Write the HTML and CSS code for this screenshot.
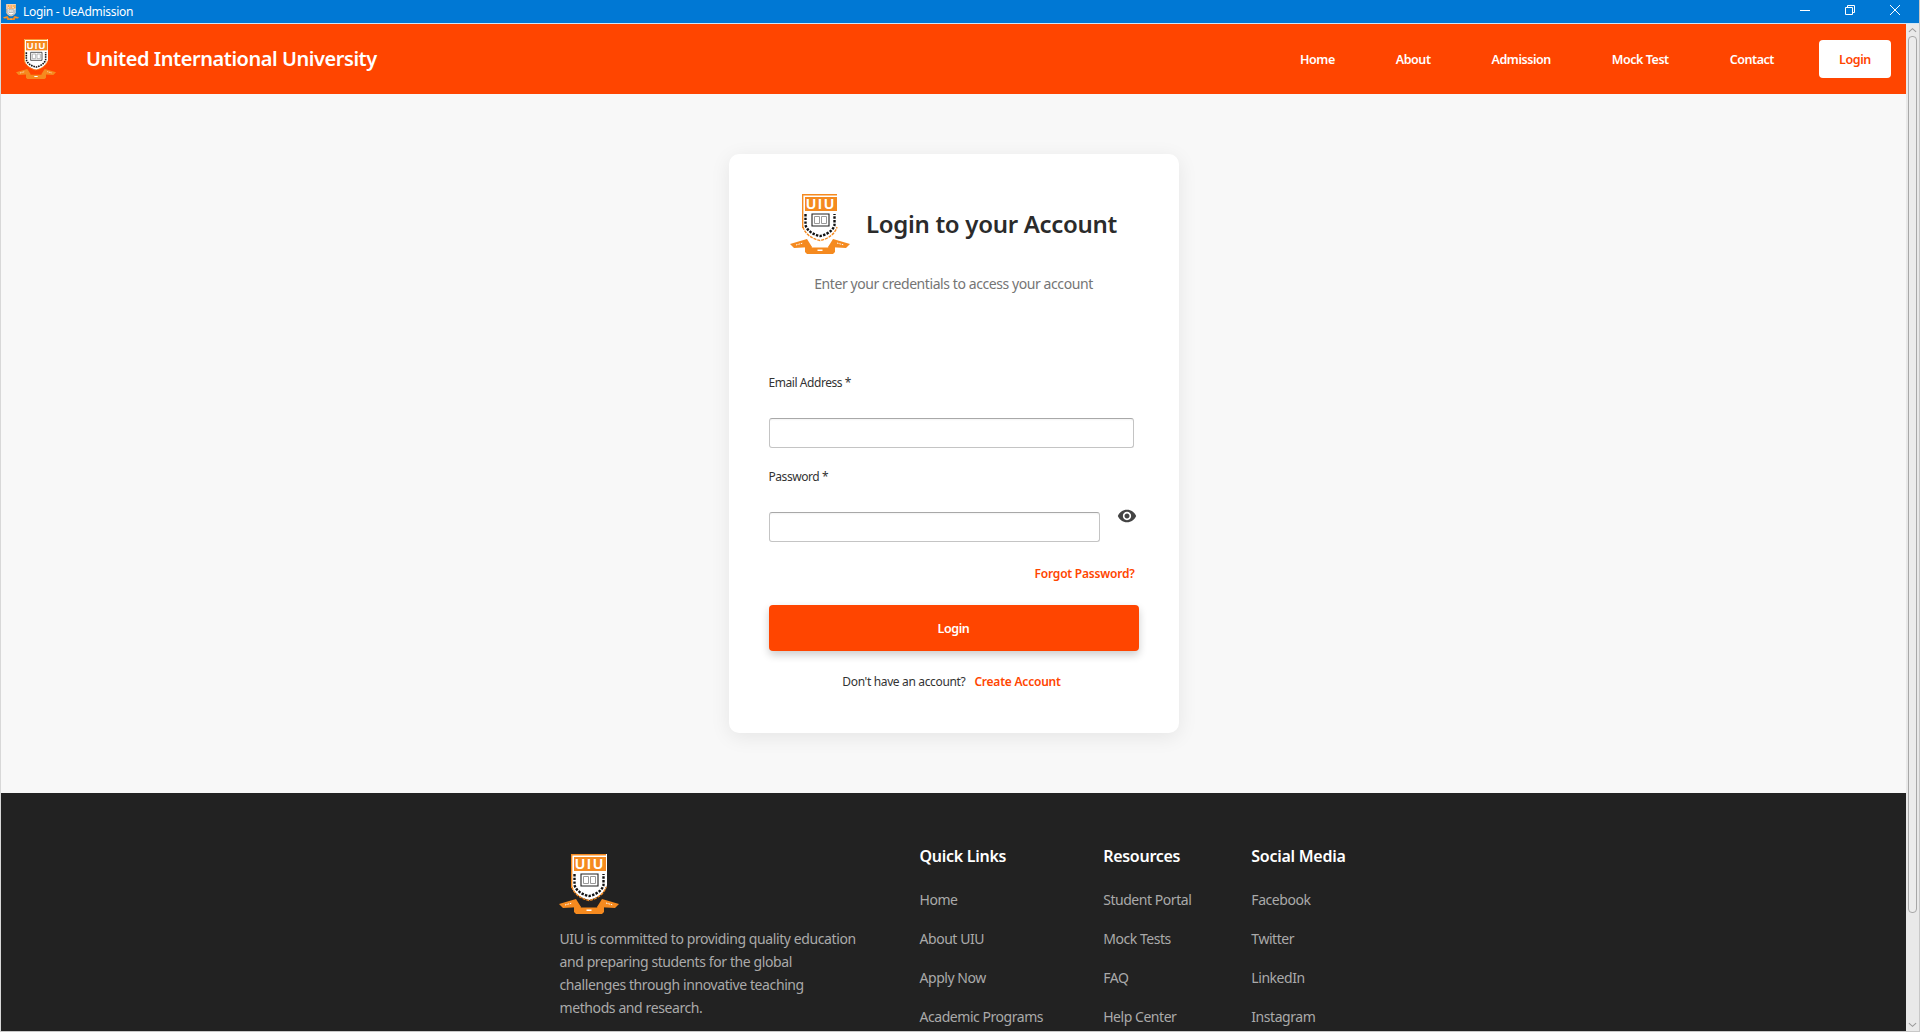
FILE: index.html
```html
<!DOCTYPE html>
<html lang="en">
<head>
<meta charset="utf-8">
<title>Login - UeAdmission</title>
<link rel="stylesheet" href="styles.css">
</head>
<body>
<svg class="defs" width="0" height="0" aria-hidden="true">
  <defs>
    <symbol id="crest" viewBox="0 0 60 60">
      <path d="M12 0H48V31C47 38 39 44 30 46C21 44 13 38 12 31Z" fill="#fff"/>
      <path d="M12.7 34V.7H47" fill="none" stroke="#f58a1f" stroke-width="1.4"/>
      <path d="M15 3H47V17H15Z" fill="#f58a1f"/>
      <text x="31" y="15" class="crest-text">UIU</text>
      <path d="M15.5 20V31C17 37 24 41 30 42C36 41 43 37 44.5 31V20" fill="none" stroke="#111" stroke-width="2.4" stroke-dasharray="2.4 1.3"/>
      <path d="M13 33C15 40 22 45 30 46.5C38 45 45 40 47 33" fill="none" stroke="#f58a1f" stroke-width="1.4" stroke-dasharray="3 1"/>
      <path d="M22 20H39V32H22Z" fill="#fff" stroke="#222" stroke-width="1.1"/>
      <path d="M24.5 22.5H29.5V29.5H24.5ZM31.5 22.5H36.5V29.5H31.5Z" fill="none" stroke="#999" stroke-width="1"/>
      <path d="M0 50L17 45L22 53L4 54Z" fill="#f58a1f"/>
      <path d="M60 50L43 45L38 53L56 54Z" fill="#f58a1f"/>
      <path d="M15 51H20L22 53.5H38L40 51H45V58L43 60H17L15 58Z" fill="#f58a1f"/>
      <path d="M27.5 55.5H32.5V57H27.5Z" fill="#fff"/>
      <path d="M6 51L13 49M47 49L54 51" stroke="#fff" stroke-width="1" stroke-dasharray="1.5 1"/>
    </symbol>
  </defs>
</svg>
<div class="window">
  <div class="titlebar">
    <div class="titlebar-left">
      <svg class="title-icon"><use href="#crest"/></svg>
      <span class="title-text">Login - UeAdmission</span>
    </div>
    <div class="window-controls">
      <svg class="win-btn" viewBox="0 0 10 10"><path d="M0 5.5H10" stroke="#fff" fill="none"/></svg>
      <svg class="win-btn" viewBox="0 0 10 10"><path d="M.5 2.5H7.5V9.5H.5ZM2.5 2.5V.5H9.5V7.5H7.5" stroke="#fff" fill="none"/></svg>
      <svg class="win-btn" viewBox="0 0 10 10"><path d="M0 0L10 10M10 0L0 10" stroke="#fff" fill="none"/></svg>
    </div>
  </div>
  <div class="viewport">
    <div class="page">
      <header class="app-header">
        <div class="brand">
          <svg class="brand-logo"><use href="#crest"/></svg>
          <span class="brand-name">United International University</span>
        </div>
        <nav class="nav">
          <a class="nav-link">Home</a>
          <a class="nav-link">About</a>
          <a class="nav-link">Admission</a>
          <a class="nav-link">Mock Test</a>
          <a class="nav-link">Contact</a>
          <a class="nav-login">Login</a>
        </nav>
      </header>
      <main class="main">
        <section class="card">
          <div class="card-head">
            <svg class="card-logo"><use href="#crest"/></svg>
            <h1 class="card-title">Login to your Account</h1>
          </div>
          <p class="card-sub">Enter your credentials to access your account</p>
          <form class="form">
            <label class="field-label">Email Address *</label>
            <div class="input input-email"></div>
            <label class="field-label">Password *</label>
            <div class="password-row">
              <div class="input input-password"></div>
              <svg class="eye" viewBox="0 0 24 24"><path d="M12 4.5C7 4.5 2.73 7.61 1 12c1.73 4.39 6 7.5 11 7.5s9.27-3.11 11-7.5c-1.73-4.39-6-7.5-11-7.5zM12 17c-2.76 0-5-2.24-5-5s2.24-5 5-5 5 2.24 5 5-2.24 5-5 5zm0-8c-1.66 0-3 1.34-3 3s1.34 3 3 3 3-1.34 3-3-1.34-3-3-3z"/></svg>
            </div>
            <div class="forgot-row"><a class="link-accent">Forgot Password?</a></div>
            <div class="submit">Login</div>
            <p class="signup"><span>Don't have an account?</span><a class="link-accent">Create Account</a></p>
          </form>
        </section>
      </main>
      <footer class="footer">
        <div class="footer-about">
          <svg class="footer-logo"><use href="#crest"/></svg>
          <p class="footer-text">UIU is committed to providing quality education and preparing students for the global challenges through innovative teaching methods and research.</p>
        </div>
        <div class="footer-col col-quick">
          <h3 class="footer-head">Quick Links</h3>
          <a class="footer-link">Home</a>
          <a class="footer-link">About UIU</a>
          <a class="footer-link">Apply Now</a>
          <a class="footer-link">Academic Programs</a>
        </div>
        <div class="footer-col col-res">
          <h3 class="footer-head">Resources</h3>
          <a class="footer-link">Student Portal</a>
          <a class="footer-link">Mock Tests</a>
          <a class="footer-link">FAQ</a>
          <a class="footer-link">Help Center</a>
        </div>
        <div class="footer-col col-social">
          <h3 class="footer-head">Social Media</h3>
          <a class="footer-link">Facebook</a>
          <a class="footer-link">Twitter</a>
          <a class="footer-link">LinkedIn</a>
          <a class="footer-link">Instagram</a>
        </div>
      </footer>
    </div>
    <div class="scrollbar">
      <svg class="scroll-arrow" viewBox="0 0 10 6"><path d="M1 5L5 1.5L9 5" fill="none" stroke="#9a9a9a" stroke-width="1.2"/></svg>
      <div class="scroll-thumb"></div>
      <svg class="scroll-arrow arrow-down" viewBox="0 0 10 6"><path d="M1 1L5 4.5L9 1" fill="none" stroke="#9a9a9a" stroke-width="1.2"/></svg>
    </div>
  </div>
</div>
</body>
</html>
```

FILE: styles.css
```css
* { box-sizing: border-box; }
html, body { margin: 0; height: 100%; overflow: hidden; }
body { font-family: "Noto Sans", "Open Sans", sans-serif; background: #fff; }
.defs { position: absolute; }
.crest-text { font: 700 14px "Liberation Sans", sans-serif; fill: #fff; text-anchor: middle; letter-spacing: 2px; }

.window { height: 1032px; display: flex; flex-direction: column; overflow: hidden; border-bottom: 1px solid #c8c8c8; border-left: 1px solid #d8d8d8; border-right: 1px solid #c8c8c8; }
.titlebar { height: 24px; margin: 0 -1px; flex: none; background: #0078d4; border-bottom: 1px solid #cfe6f7; display: flex; justify-content: space-between; }
.titlebar-left { display: flex; align-items: center; padding-left: 3px; }
.title-icon { width: 16px; height: 16px; }
.title-text { margin-left: 4px; font-size: 12px; letter-spacing: -.3px; color: #fff; }
.window-controls { display: flex; gap: 35px; padding: 5px 20px 0 0; }
.win-btn { width: 10px; height: 10px; }

.viewport { flex: 1; min-height: 0; display: flex; }
.page { flex: 1; min-width: 0; overflow: hidden; background: #f8f8f8; }
.scrollbar { width: 13px; flex: none; background: #e9e9e9; display: flex; flex-direction: column; align-items: center; padding: 3px 0; }
.scroll-arrow { width: 9px; height: 6px; flex: none; }
.arrow-down { margin-top: auto; }
.scroll-thumb { width: 9px; height: 877px; margin-top: 3px; background: #ececec; border: 1px solid #a8a8a8; border-radius: 4px; }

.app-header { height: 70px; padding: 0 15px; background: #ff4500; display: flex; align-items: center; justify-content: space-between; }
.brand { display: flex; align-items: center; }
.brand-logo { width: 40px; height: 40px; }
.brand-name { margin: -2px 0 0 30px; font-size: 20px; font-weight: 600; letter-spacing: -.45px; color: #fff; }
.nav { display: flex; align-items: center; }
.nav-link { margin-right: 61px; font-size: 12.5px; font-weight: 600; letter-spacing: -.45px; color: #fff; }
.nav-login { margin-left: -16px; width: 72px; height: 38px; display: flex; align-items: center; justify-content: center; background: #fff; border-radius: 4px; font-size: 12.5px; font-weight: 600; letter-spacing: -.4px; color: #ff4500; }

.main { padding: 60px 0; display: flex; justify-content: center; }
.card { width: 450px; padding: 40px 40px 42px; background: #fff; border-radius: 10px; box-shadow: 0 4px 20px rgba(0,0,0,.08); }
.card-head { display: flex; align-items: center; justify-content: center; gap: 16px; }
.card-logo { width: 60px; height: 60px; }
.card-title { margin: -2px 0 0; font-size: 24px; font-weight: 600; letter-spacing: -.3px; color: #2b2b2b; }
.card-sub { margin: 20px 0 0; line-height: 20px; text-align: center; font-size: 14px; letter-spacing: -.42px; color: #757575; }
.form { margin-top: 80px; }
.field-label { display: block; height: 18px; line-height: 18px; font-size: 12px; letter-spacing: -.44px; color: #333; }
.input { height: 30px; background: #fff; border: 1px solid #c4c4c4; border-top-color: #a8a8a8; border-radius: 3px; box-shadow: inset 0 2px 2px -1px rgba(0,0,0,.05); }
.input-email { width: 365px; margin: 26px 0 20px; }
.input-password { width: 331px; margin-top: 26px; }
.password-row { display: flex; align-items: flex-start; gap: 17px; }
.eye { width: 20px; height: 20px; margin-top: 20px; fill: #444; }
.forgot-row { width: 366px; margin-top: 21px; line-height: 18px; text-align: right; }
.link-accent { font-size: 12px; font-weight: 600; letter-spacing: -.22px; color: #ff4500; }
.submit { height: 46px; margin-top: 22px; display: flex; align-items: center; justify-content: center; background: #ff4500; border-radius: 4px; box-shadow: 0 4px 8px rgba(0,0,0,.2); font-size: 12.5px; font-weight: 600; letter-spacing: -.4px; color: #fff; }
.signup { margin: 22px 0 0; padding-right: 4px; line-height: 18px; display: flex; justify-content: center; gap: 9px; font-size: 12px; letter-spacing: -.35px; color: #333; }

.footer { height: 300px; padding: 51px 0 0; background: #222; display: flex; justify-content: center; gap: 60px; }
.footer-about { width: 300px; padding-top: 10px; }
.footer-logo { display: block; width: 60px; height: 60px; }
.footer-text { margin: 13px 0 0; line-height: 23px; font-size: 14px; letter-spacing: -.4px; color: #aaa; }
.footer-col { display: flex; flex-direction: column; align-items: flex-start; }
.col-social { margin-right: 2px; }
.footer-head { margin: 0 0 22px; line-height: 24px; font-size: 16px; font-weight: 600; letter-spacing: -.27px; color: #fff; }
.footer-link { height: 19px; line-height: 19px; margin-bottom: 20px; font-size: 14px; letter-spacing: -.45px; color: #aaa; white-space: nowrap; }
```
